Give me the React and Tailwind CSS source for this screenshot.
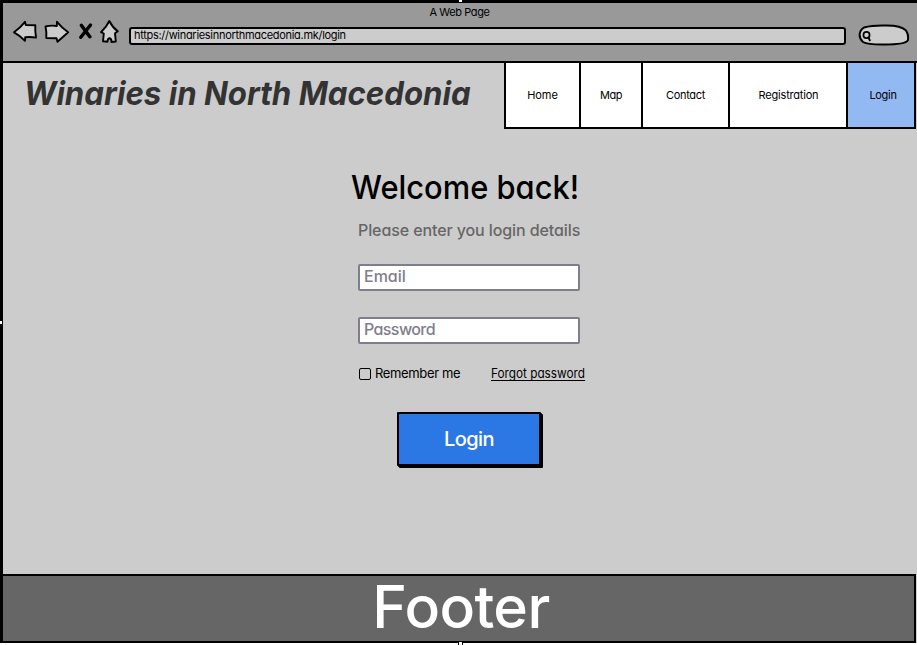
import React from "react";

const links = [
  { label: "Home", cell: "w-[75px] border-l-2", text: "tracking-[-0.1px]" },
  { label: "Map", cell: "w-[62px] border-l-2", text: "tracking-[-0.4px]" },
  { label: "Contact", cell: "w-[87px] border-l-2", text: "tracking-[-0.3px]" },
  { label: "Registration", cell: "w-[118px] border-l-2", text: "tracking-[-0.2px] pl-px" },
  { label: "Login", cell: "w-[70px] border-x-2 bg-[#93b9f2] pl-[4px]", text: "tracking-[-0.3px]" },
];

function Toolbar() {
  return (
    <div className="flex h-[60px] flex-col border-b-2 border-black bg-[#999999]">
      <div className="h-[13px] pt-px text-center text-[11px] leading-[16px] tracking-[-0.4px]">
        <span className="mr-px">A Web Page</span>
      </div>
      <div className="flex h-[34px] items-center pr-[5px]">
        <svg className="h-[30px] w-[126px] shrink-0" viewBox="3 18 126 30" fill="#cccccc" stroke="#000" strokeWidth="1.9" strokeLinejoin="round" strokeLinecap="round">
          <path d="M14 32.3 Q20 28 25 21.8 L25.8 25 L35.3 25.3 Q35 31 36 37.6 Q30 36.5 25.2 37.3 L25 40.8 Q20 35.5 14 32.3Z" />
          <path d="M45.5 26.5 Q51 25 56.8 26 L57 21.8 Q62 28 68.2 32.3 Q63 37 57.5 41.8 L56.5 38.2 L46.3 38 Q46.8 32 45.5 26.5Z" />
          <path d="M81.3 25.3 Q86 32 90 36.8 M90.5 25 Q85 32 80.8 37.3" strokeWidth="3.4" />
          <path d="M109.3 21 Q112.5 27.5 117.8 31.3 L115 33.3 L115.8 41.5 L111.5 42 Q111.5 38.3 109.3 38.3 Q107.7 38.5 107.5 41.8 L103 41.3 L103.8 33.5 L101 32.2 Q106.5 27 109.3 21Z" />
        </svg>
        <div className="mt-[5px] flex h-[18px] w-[717px] items-center rounded-[3px] border-2 border-black bg-[#cccccc] pl-[3px] text-[11px]">
          <span className="tracking-[-0.3px]">https://winariesinnorthmacedonia.mk/login</span>
        </div>
        <svg className="ml-3 mt-[4px] h-[24px] w-[52px] shrink-0" viewBox="858 23 52 24" fill="#cccccc" stroke="#000" strokeWidth="2" strokeLinecap="round">
          <path d="M864 27.5 Q872 25.2 885 25.5 Q901 25.2 906 30.5 Q909 35 907.8 40.5 Q905 44.5 885 44.5 Q868 44.8 863 42 Q859.5 39 859.6 34.5 Q860 30 864 27.5Z" />
          <circle cx="866.5" cy="35" r="3.1" strokeWidth="1.7" />
          <path d="M868.5 37.5 L869.8 40.3" />
        </svg>
      </div>
    </div>
  );
}

function Field({ label, text }) {
  return (
    <div className="flex h-[27px] w-[222px] items-center rounded-[2px] border-2 border-[#7f7e8c] bg-white pb-[3px] pl-1 text-[16px] font-medium leading-none text-[#7f7e8c]">
      <span className={text}>{label}</span>
    </div>
  );
}

export default function App() {
  return (
    <div className="relative h-[645px] w-[917px] overflow-hidden bg-white font-['Inter','Liberation_Sans',sans-serif] text-black [font-feature-settings:'cv11']">
      <div className="flex h-[643px] flex-col border-l-[3px] border-t-[3px] border-black bg-[#cccccc]">
        <Toolbar />
        <div className="flex h-[66px] justify-between">
          <h1 className="w-[480px] pl-[21px] pt-[9px] text-[33px] font-bold italic leading-[42px] text-[#333333]">
            <span className="inline-block origin-left scale-x-[0.946] whitespace-nowrap">Winaries in North Macedonia</span>
          </h1>
          <nav className="mr-px flex h-[66px] shrink-0">
            {links.map((l) => (
              <a key={l.label} className={"flex items-center justify-center border-b-2 border-black text-[11px] leading-none " + (l.label === "Login" ? "" : "bg-white ") + l.cell}>
                <span className={l.text}>{l.label}</span>
              </a>
            ))}
          </nav>
        </div>
        <main className="ml-[348px] flex h-[445px] flex-col items-start">
          <h2 className="mt-[37px] h-[42px] whitespace-nowrap text-[33px] font-medium leading-[42px]">
            <span className="inline-block origin-left scale-x-[0.935]">Welcome back!</span>
          </h2>
          <p className="ml-[7px] mt-[10px] h-6 whitespace-nowrap text-[16px] font-medium leading-6 tracking-[-0.1px] text-[#666666]">
            <span>Please enter you login details</span>
          </p>
          <div className="ml-[7px] mt-[22px] flex flex-col gap-[26px]">
            <Field label="Email" text="" />
            <Field label="Password" text="tracking-[-0.6px]" />
          </div>
          <div className="ml-[8px] mt-[20px] flex h-5 items-center whitespace-nowrap text-[13px] leading-5">
            <i className="mr-1 h-3 w-3 rounded-[2px] border-[1.5px] border-black" />
            <span className="w-[116px] pb-[2px] tracking-[-0.35px]">Remember me</span>
            <span className="mb-[2px] inline-block origin-left scale-x-[0.905] border-b border-black leading-[14px]">Forgot password</span>
          </div>
          <button className="ml-[46px] mt-[28px] flex h-[54px] w-[144px] items-center justify-center rounded-[1px] border-2 border-black bg-[#2b78e4] text-[20px] font-medium tracking-[-0.6px] text-white shadow-[1px_1px_0_#000,2px_2px_0_#000]">
            <span>Login</span>
          </button>
        </main>
        <footer className="mr-px flex h-[69px] items-center justify-center border-y-2 border-r-2 border-black bg-[#666666] pb-[4px] pl-[5px] text-[59px] font-medium leading-none tracking-[-0.6px] text-white">
          <span>Footer</span>
        </footer>
      </div>
      <i className="absolute left-[459px] top-0 h-[2px] w-[3px] bg-white" />
      <i className="absolute left-0 top-[321px] h-[3px] w-[2px] bg-white" />
      <i className="absolute left-[458px] top-[641px] h-[4px] w-[5px] border-x border-t border-black bg-white" />
    </div>
  );
}
